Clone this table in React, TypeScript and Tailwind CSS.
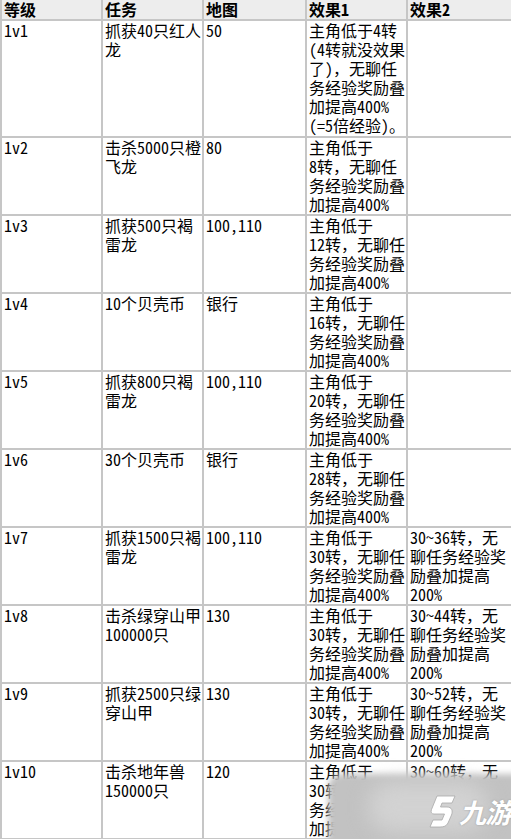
import type { ReactNode } from 'react';

type Row = {
  level: string;
  task: string[];
  map: string;
  effect1: string[];
  effect2: string[];
};

const effect = (n: number) => ['主角低于', `${n}转，无聊任`, '务经验奖励叠', '加提高400%'];
const bonus = (n: number) => [`30~${n}转，无`, '聊任务经验奖', '励叠加提高', '200%'];

const rows: Row[] = [
  {
    level: '1v1',
    task: ['抓获40只红人', '龙'],
    map: '50',
    effect1: ['主角低于4转', '(4转就没效果', '了)，无聊任', '务经验奖励叠', '加提高400%', '(=5倍经验)。'],
    effect2: [],
  },
  { level: '1v2', task: ['击杀5000只橙', '飞龙'], map: '80', effect1: effect(8), effect2: [] },
  { level: '1v3', task: ['抓获500只褐', '雷龙'], map: '100,110', effect1: effect(12), effect2: [] },
  { level: '1v4', task: ['10个贝壳币'], map: '银行', effect1: effect(16), effect2: [] },
  { level: '1v5', task: ['抓获800只褐', '雷龙'], map: '100,110', effect1: effect(20), effect2: [] },
  { level: '1v6', task: ['30个贝壳币'], map: '银行', effect1: effect(28), effect2: [] },
  { level: '1v7', task: ['抓获1500只褐', '雷龙'], map: '100,110', effect1: effect(30), effect2: bonus(36) },
  { level: '1v8', task: ['击杀绿穿山甲', '100000只'], map: '130', effect1: effect(30), effect2: bonus(44) },
  { level: '1v9', task: ['抓获2500只绿', '穿山甲'], map: '130', effect1: effect(30), effect2: bonus(52) },
  { level: '1v10', task: ['击杀地年兽', '150000只'], map: '120', effect1: effect(30), effect2: bonus(60) },
];

const Cell = ({ children, head }: { children?: ReactNode; head?: boolean }) => (
  <div
    className={
      head
        ? 'bg-[#ededed] pl-[2px] font-bold whitespace-nowrap'
        : 'bg-white pl-[2px] whitespace-nowrap overflow-hidden'
    }
  >
    {children}
  </div>
);

const Lines = ({ lines }: { lines: string[] }) => (
  <>
    {lines.map((l, i) => (
      <div key={i}>{l}</div>
    ))}
  </>
);

const Watermark = () => (
  <div className="absolute left-[328px] top-[774px] w-[200px] h-[80px]">
    <div className="absolute inset-0 rounded-tl-[14px] bg-[#c2c2c2] blur-[3px]" />
    <div className="absolute left-[40px] top-[8px] w-[120px] h-[50px] rounded-full bg-[#d2d2d2] blur-[10px]" />
    <div className="absolute left-[100px] top-[20px] flex items-center gap-[3px]">
      <svg width="28" height="34" viewBox="0 0 28 34">
        <path
          d="M9 2 L27 2 L24 9 L14 9 L12.5 13 L19 13 C24 13 25 17 23.5 21 L20 29 C18.5 32 16 33 12 33 L2 33 L5 26 L14 26 L16.5 20 L6 20 C3.5 20 2.5 18 3.5 15.5 Z"
          fill="#ffffff"
          stroke="#a8a8a8"
          strokeWidth="0.8"
        />
      </svg>
      <span className="text-[27px] leading-none italic font-bold text-white tracking-[-1px] [text-shadow:0_0_2px_#9a9a9a] font-['Noto_Sans_CJK_SC',sans-serif]">
        九游
      </span>
    </div>
  </div>
);

const App = () => {
  return (
    <div className="relative w-[511px] h-[839px] overflow-hidden bg-white text-black text-[16px] leading-[19px] font-['Noto_Sans_Mono_CJK_SC','Noto_Sans_CJK_SC',sans-serif]">
      <div className="grid grid-cols-[99px_99px_101px_99px_103px] grid-rows-[19px_115px_repeat(9,76px)] gap-[2px] bg-[#c6c6c6] pl-[2px] pb-[2px] w-[513px]">
        <Cell head>等级</Cell>
        <Cell head>任务</Cell>
        <Cell head>地图</Cell>
        <Cell head>效果1</Cell>
        <Cell head>效果2</Cell>
        {rows.map((r) => (
          <div key={r.level} className="contents">
            <Cell>{r.level}</Cell>
            <Cell>
              <Lines lines={r.task} />
            </Cell>
            <Cell>{r.map}</Cell>
            <Cell>
              <Lines lines={r.effect1} />
            </Cell>
            <Cell>
              <Lines lines={r.effect2} />
            </Cell>
          </div>
        ))}
      </div>
      <Watermark />
    </div>
  );
};

export default App;
